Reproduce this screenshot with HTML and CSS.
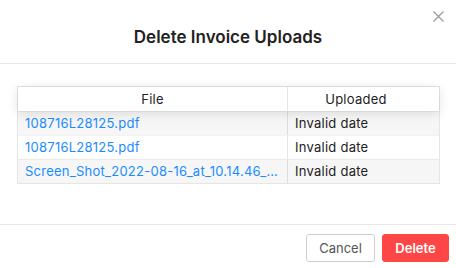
FILE: index.html
```html
<!DOCTYPE html>
<html lang="en">
<head>
    <meta charset="UTF-8">
    <title>Delete Invoice Uploads</title>
    <link rel="stylesheet" href="styles.css">
</head>
<body>
    <div class="modal">
        <div class="modal-header">
            <h2>Delete Invoice Uploads</h2>
            <button class="close" aria-label="Close">
                <svg width="11" height="11" viewBox="0 0 11 11"><path d="M0.5 0.5L10.5 10.5M10.5 0.5L0.5 10.5" stroke="#9a9a9a" stroke-width="1.2" fill="none"/></svg>
            </button>
        </div>

        <div class="modal-body">
            <div class="rt">
                <div class="rt-head">
                    <div class="cell col-file">File</div>
                    <div class="cell col-date">Uploaded</div>
                </div>
                <div class="rt-row odd">
                    <div class="cell col-file"><a href="#">108716L28125.pdf</a></div>
                    <div class="cell col-date">Invalid date</div>
                </div>
                <div class="rt-row">
                    <div class="cell col-file"><a href="#">108716L28125.pdf</a></div>
                    <div class="cell col-date">Invalid date</div>
                </div>
                <div class="rt-row odd">
                    <div class="cell col-file"><a href="#">Screen_Shot_2022-08-16_at_10.14.46_…</a></div>
                    <div class="cell col-date">Invalid date</div>
                </div>
            </div>
        </div>

        <div class="modal-footer">
            <button class="btn btn-cancel">Cancel</button>
            <button class="btn btn-delete">Delete</button>
        </div>
    </div>
</body>
</html>
```

FILE: styles.css
```css
body {
    margin: 0;
    font-family: 'Inter', 'Liberation Sans', sans-serif;
    background-color: #fff;
    color: #222;
}

.modal {
    width: 456px;
    height: 268px;
    display: flex;
    flex-direction: column;
}

.modal-header {
    position: relative;
    height: 63px;
    border-bottom: 1px solid #e8e8e8;
    display: flex;
    align-items: center;
    justify-content: center;
}

.modal-header h2 {
    margin: 0;
    padding-top: 10px;
    font-size: 17px;
    font-weight: 600;
    color: #222;
}

.close {
    position: absolute;
    top: 11px;
    right: 12px;
    padding: 0;
    border: none;
    background: none;
    cursor: pointer;
    line-height: 0;
}

.modal-body {
    padding: 22px 16px 0 17px;
    height: 138px;
    border-bottom: 1px solid #e8e8e8;
}

.rt {
    border: 1px solid rgba(0, 0, 0, 0.1);
    font-size: 13px;
    letter-spacing: 0.25px;
}

.rt-head {
    display: flex;
    box-shadow: 0 2px 12px 0 rgba(0, 0, 0, 0.12);
    position: relative;
}

.rt-head .cell {
    height: 24px;
    line-height: 24px;
    text-align: center;
    color: #222;
}

.rt-head .col-date {
    padding-right: 22px;
}

.rt-row {
    display: flex;
    border-top: 1px solid rgba(0, 0, 0, 0.05);
}

.rt-row.odd {
    background-color: rgba(0, 0, 0, 0.035);
}

.cell {
    padding: 0 7px;
    height: 23px;
    line-height: 23px;
    white-space: nowrap;
    overflow: hidden;
    text-overflow: ellipsis;
}

.col-file {
    width: 270px;
    flex: none;
    box-sizing: border-box;
    border-right: 1px solid rgba(0, 0, 0, 0.1);
}

.col-date {
    flex: 1;
}

.cell a {
    color: #1a8cff;
    text-decoration: none;
}

.modal-footer {
    display: flex;
    justify-content: flex-end;
    gap: 7px;
    padding: 9px 7px 0 0;
}

.btn {
    height: 28px;
    padding: 0 10px;
    font-family: inherit;
    font-size: 13px;
    border-radius: 3px;
    cursor: pointer;
}

.btn-cancel {
    background-color: #fff;
    border: 1px solid #d0d0d0;
    color: #555;
    width: 69px;
}

.btn-delete {
    background-color: #ff4646;
    border: 1px solid #ff4646;
    color: #fff;
    font-weight: 600;
    width: 67px;
}
```
